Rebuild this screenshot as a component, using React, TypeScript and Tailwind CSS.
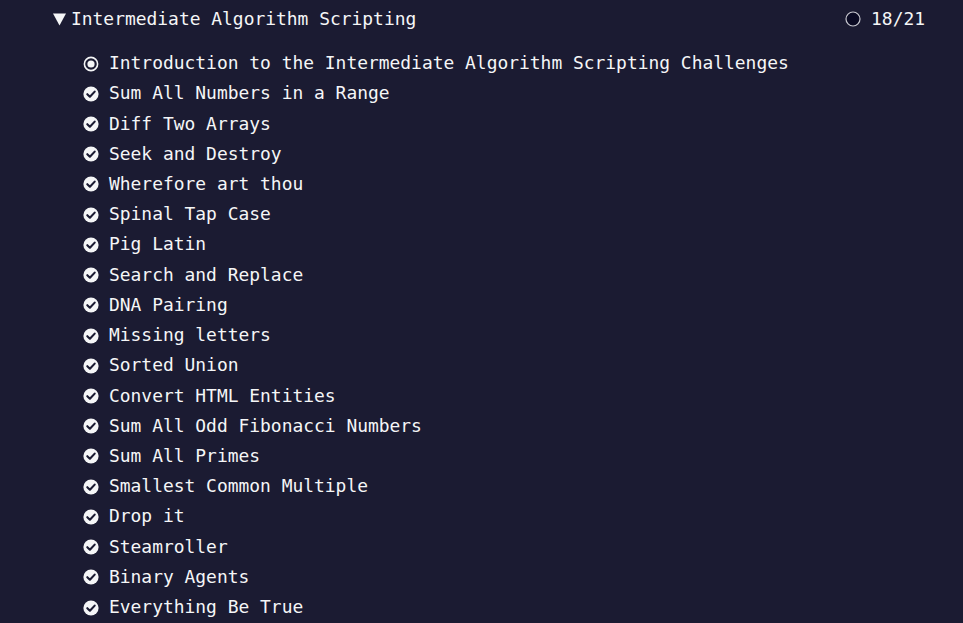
const challenges = [
  "Sum All Numbers in a Range",
  "Diff Two Arrays",
  "Seek and Destroy",
  "Wherefore art thou",
  "Spinal Tap Case",
  "Pig Latin",
  "Search and Replace",
  "DNA Pairing",
  "Missing letters",
  "Sorted Union",
  "Convert HTML Entities",
  "Sum All Odd Fibonacci Numbers",
  "Sum All Primes",
  "Smallest Common Multiple",
  "Drop it",
  "Steamroller",
  "Binary Agents",
  "Everything Be True",
];

function CheckCircle() {
  return (
    <svg width="16" height="16" viewBox="0 0 16 16" className="shrink-0">
      <circle cx="8" cy="8" r="7.6" fill="#f5f6f7" />
      <path d="M4.3 8.2 L6.9 10.7 L11.7 5.6" fill="none" stroke="#1b1b32" strokeWidth="2.1" strokeLinecap="round" strokeLinejoin="round" />
    </svg>
  );
}

function RadioDot() {
  return (
    <svg width="16" height="16" viewBox="0 0 16 16" className="shrink-0">
      <circle cx="8" cy="8" r="6.6" fill="#1b1b32" stroke="#f5f6f7" strokeWidth="1.6" />
      <circle cx="8" cy="8" r="3.6" fill="#f5f6f7" />
    </svg>
  );
}

function Row({ title, done }: { title: string; done: boolean }) {
  return (
    <li className="flex items-center gap-[10px] h-[30.22px]">
      {done ? <CheckCircle /> : <RadioDot />}
      <span>{title}</span>
    </li>
  );
}

export default function App() {
  return (
    <div
      className="w-[963px] h-[623px] overflow-hidden pt-px bg-[#1b1b32] text-[#f5f6f7] text-[17.93px]"
      style={{ fontFamily: '"DejaVu Sans Mono", "Liberation Mono", monospace' }}
    >
      {/* cabecera del bloque */}
      <div className="flex items-center justify-between h-9 pl-[53px] pr-[38px]">
        <div className="flex items-center gap-[5px]">
          <svg width="13" height="13" viewBox="0 0 13 13">
            <path d="M0 0.5 H13 L6.5 12.5 Z" fill="#f5f6f7" />
          </svg>
          <span>Intermediate Algorithm Scripting</span>
        </div>
        <div className="flex items-center gap-[10px]">
          <svg width="16" height="16" viewBox="0 0 16 16">
            <circle cx="8" cy="8" r="7" fill="#0a0a23" stroke="#c8c8d0" strokeWidth="1.2" />
          </svg>
          <span>18/21</span>
        </div>
      </div>

      <ul className="pl-[83px] pt-[11.5px]">
        <Row title="Introduction to the Intermediate Algorithm Scripting Challenges" done={false} />
        {challenges.map((c) => (
          <Row key={c} title={c} done={true} />
        ))}
      </ul>
    </div>
  );
}
